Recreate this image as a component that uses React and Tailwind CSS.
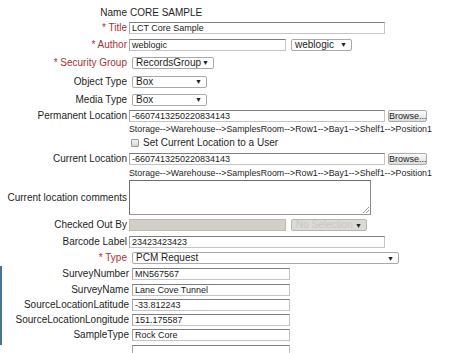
import React from "react";

function Row({ cls, label, req, children }) {
  return (
    <div className={"flex items-center " + cls}>
      <div className="w-[127px] shrink-0 text-right leading-none whitespace-nowrap">
        {req ? <span className="text-[#a83232]">* {label}</span> : label}
      </div>
      {children}
    </div>
  );
}

function SRow({ cls, label, children }) {
  return (
    <div className={"flex items-center " + cls}>
      <div className="w-[127px] shrink-0 text-right leading-none whitespace-nowrap">{label}</div>
      {children}
    </div>
  );
}

function TInput({ cls, value }) {
  return (
    <div
      className={
        "h-[12px] shrink-0 border border-[#c4c4c4] border-t-[#7d7d7d] border-l-[#a8a8a8] bg-white text-[9px] leading-[10px] pl-[2px] overflow-hidden whitespace-nowrap text-[#1a1a1a] " +
        cls
      }
    >
      {value}
    </div>
  );
}

function Sel({ cls, text }) {
  return (
    <div
      className={
        "h-[12px] shrink-0 border border-[#a9a9a9] rounded-[2px] bg-white flex items-center justify-between pl-[3px] pr-[4px] text-[10px] leading-none " +
        cls
      }
    >
      <span>{text}</span>
      <span className="text-[7px] leading-none">▼</span>
    </div>
  );
}

function Browse() {
  return (
    <div className="ml-[3px] w-[39px] h-[12px] shrink-0 border border-[#acacac] rounded-[2px] bg-gradient-to-b from-[#fbfbfb] to-[#dcdcdc] text-[9px] leading-[10px] text-center text-[#222]">
      Browse...
    </div>
  );
}

const PATH = "Storage-->Warehouse-->SamplesRoom-->Row1-->Bay1-->Shelf1-->Position1";

export default function App() {
  return (
    <div className="relative w-[456px] h-[353px] overflow-hidden bg-white font-['Liberation_Sans',Arial,sans-serif] text-[10px] text-[#1e1e1e] pt-[5px]">
      <Row cls="h-[15px]" label="Name">
        <span className="ml-[3px] leading-none">CORE SAMPLE</span>
      </Row>
      <Row cls="h-[16px]" label="Title" req>
        <TInput cls="ml-[2px] w-[256px]" value="LCT Core Sample" />
      </Row>
      <Row cls="h-[17px]" label="Author" req>
        <TInput cls="ml-[2px] w-[157px]" value="weblogic" />
        <Sel cls="ml-[5px] w-[61px]" text="weblogic" />
      </Row>
      <Row cls="h-[19px]" label="Security Group" req>
        <Sel cls="ml-[5px] w-[82px]" text="RecordsGroup" />
      </Row>
      <Row cls="h-[19px]" label="Object Type">
        <Sel cls="ml-[5px] w-[75px]" text="Box" />
      </Row>
      <Row cls="h-[17px]" label="Media Type">
        <Sel cls="ml-[5px] w-[75px]" text="Box" />
      </Row>
      <Row cls="h-[16px]" label="Permanent Location">
        <TInput cls="ml-[2px] w-[256px]" value="-6607413250220834143" />
        <Browse />
      </Row>
      <div className="h-[11px] flex items-center pl-[129px] text-[8.8px] leading-none whitespace-nowrap">{PATH}</div>
      <div className="h-[16px] flex items-center pl-[131px]">
        <div className="w-[8px] h-[8px] shrink-0 border border-[#9a9a9a] rounded-[1px] bg-gradient-to-b from-[#f4f4f4] to-[#d6d6d6]" />
        <span className="ml-[4px] leading-none">Set Current Location to a User</span>
      </div>
      <Row cls="h-[16px]" label="Current Location">
        <TInput cls="ml-[2px] w-[256px]" value="-6607413250220834143" />
        <Browse />
      </Row>
      <div className="h-[12px] flex items-center pl-[129px] text-[8.8px] leading-none whitespace-nowrap">{PATH}</div>
      <Row cls="h-[37px]" label="Current location comments">
        <div className="relative ml-[2px] w-[242px] h-[35px] shrink-0 border border-[#6e6e6e] border-r-[#8a8a8a] border-b-[#9a9a9a] bg-white">
          <svg className="absolute right-[1px] bottom-[1px]" width="7" height="7" viewBox="0 0 7 7">
            <line x1="1" y1="7" x2="7" y2="1" stroke="#999" strokeWidth="1" />
            <line x1="4" y1="7" x2="7" y2="4" stroke="#999" strokeWidth="1" />
          </svg>
        </div>
      </Row>
      <Row cls="h-[18px]" label="Checked Out By">
        <div className="ml-[2px] w-[157px] h-[12px] shrink-0 border border-[#bdbab4] bg-[#d2cec8]" />
        <div className="ml-[5px] w-[76px] h-[12px] shrink-0 border border-[#b8b6b0] rounded-[2px] bg-[#dcdad5] flex items-center justify-between pl-[4px] pr-[4px] text-[10px] leading-none">
          <span className="text-[#c9c7c1]">No Selection</span>
          <span className="text-[7px] leading-none text-[#222]">▼</span>
        </div>
      </Row>
      <Row cls="h-[16px]" label="Barcode Label">
        <TInput cls="ml-[2px] w-[256px]" value="23423423423" />
      </Row>
      <Row cls="h-[16px]" label="Type" req>
        <Sel cls="ml-[5px] w-[267px]" text="PCM Request" />
      </Row>
      <div className="border-l-2 border-[#4a7494] pb-[3px]">
        <SRow cls="h-[16px]" label="SurveyNumber">
          <TInput cls="ml-[3px] w-[158px]" value="MN567567" />
        </SRow>
        <SRow cls="h-[15px]" label="SurveyName">
          <TInput cls="ml-[3px] w-[158px]" value="Lane Cove Tunnel" />
        </SRow>
        <SRow cls="h-[15px]" label="SourceLocationLatitude">
          <TInput cls="ml-[3px] w-[158px]" value="-33.812243" />
        </SRow>
        <SRow cls="h-[15px]" label="SourceLocationLongitude">
          <TInput cls="ml-[3px] w-[158px]" value="151.175587" />
        </SRow>
        <SRow cls="h-[15px]" label="SampleType">
          <TInput cls="ml-[3px] w-[158px]" value="Rock Core" />
        </SRow>
      </div>
      <div className="flex items-start h-[15px] pl-[132px]">
        <TInput cls="w-[158px]" value="" />
      </div>
    </div>
  );
}
